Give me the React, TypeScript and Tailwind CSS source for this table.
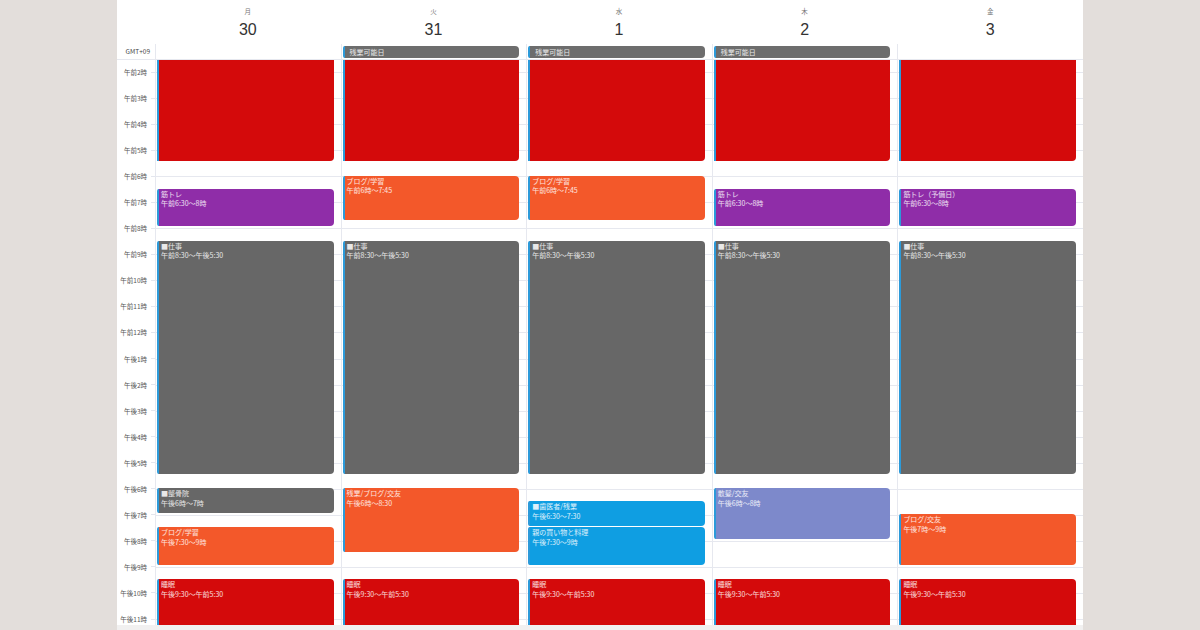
import React from "react";

const HOUR = 26.05;

type Ev = { s: number; e: number; title: string; time: string; bg: string; cont?: boolean };

const C = {
  red: "bg-[#d40a0b]",
  orange: "bg-[#f3582a]",
  purple: "bg-[#8f2da8]",
  gray: "bg-[#676767]",
  blue: "bg-[#0f9ee2]",
  lav: "bg-[#7d89cb]",
};

const SLEEP_PREV: Ev = { s: 0, e: 5.5, title: "睡眠", time: "午後9:30〜午前5:30", bg: C.red, cont: true };
const SLEEP: Ev = { s: 21.5, e: 24, title: "睡眠", time: "午後9:30〜午前5:30", bg: C.red };
const WORK: Ev = { s: 8.5, e: 17.5, title: "■仕事", time: "午前8:30〜午後5:30", bg: C.gray };

const days: { name: string; date: string; allDay: boolean; events: Ev[] }[] = [
  {
    name: "月",
    date: "30",
    allDay: false,
    events: [
      SLEEP_PREV,
      { s: 6.5, e: 8, title: "筋トレ", time: "午前6:30〜8時", bg: C.purple },
      WORK,
      { s: 18, e: 19, title: "■整骨院", time: "午後6時〜7時", bg: C.gray },
      { s: 19.5, e: 21, title: "ブログ/学習", time: "午後7:30〜9時", bg: C.orange },
      SLEEP,
    ],
  },
  {
    name: "火",
    date: "31",
    allDay: true,
    events: [
      SLEEP_PREV,
      { s: 6, e: 7.75, title: "ブログ/学習", time: "午前6時〜7:45", bg: C.orange },
      WORK,
      { s: 18, e: 20.5, title: "残業/ブログ/交友", time: "午後6時〜8:30", bg: C.orange },
      SLEEP,
    ],
  },
  {
    name: "水",
    date: "1",
    allDay: true,
    events: [
      SLEEP_PREV,
      { s: 6, e: 7.75, title: "ブログ/学習", time: "午前6時〜7:45", bg: C.orange },
      WORK,
      { s: 18.5, e: 19.5, title: "■歯医者/残業", time: "午後6:30〜7:30", bg: C.blue },
      { s: 19.5, e: 21, title: "親の買い物と料理", time: "午後7:30〜9時", bg: C.blue },
      SLEEP,
    ],
  },
  {
    name: "木",
    date: "2",
    allDay: true,
    events: [
      SLEEP_PREV,
      { s: 6.5, e: 8, title: "筋トレ", time: "午前6:30〜8時", bg: C.purple },
      WORK,
      { s: 18, e: 20, title: "散髪/交友", time: "午後6時〜8時", bg: C.lav },
      SLEEP,
    ],
  },
  {
    name: "金",
    date: "3",
    allDay: false,
    events: [
      SLEEP_PREV,
      { s: 6.5, e: 8, title: "筋トレ（予備日）", time: "午前6:30〜8時", bg: C.purple },
      WORK,
      { s: 19, e: 21, title: "ブログ/交友", time: "午後7時〜9時", bg: C.orange },
      SLEEP,
    ],
  },
];

function hourLabel(h: number) {
  if (h < 12) return `午前${h}時`;
  if (h === 12) return "午前12時";
  return `午後${h - 12}時`;
}

// y (relative to body top) of hour h
const yOf = (h: number) => 12 + (h - 2) * HOUR;
const labelHours = Array.from({ length: 22 }, (_, i) => i + 2);
const lineHours = Array.from({ length: 23 }, (_, i) => i + 2);
const FONT = { fontFamily: '"Noto Sans CJK JP", "Noto Sans", sans-serif' };

export default function App() {
  return (
    <div className="w-[1200px] h-[630px] overflow-hidden bg-[#e3dedb]" style={FONT}>
      <div className="mx-auto w-[966px] h-[630px] bg-white flex flex-col">
        {/* header */}
        <div className="flex h-[44px] shrink-0">
          <div className="w-[38px] shrink-0" />
          {days.map((d) => (
            <div key={d.date} className="flex-1 flex flex-col items-center">
              <div className="mt-[7px] h-[8px] text-[6.5px] leading-[8px] text-[#777]">{d.name}</div>
              <div
                className="mt-[5px] text-[16px] leading-[20px] text-[#333]"
                style={{ fontFamily: '"Liberation Sans", Arial, sans-serif' }}
              >
                {d.date}
              </div>
            </div>
          ))}
        </div>
        {/* all-day row */}
        <div className="flex h-[16px] shrink-0 border-b border-[#e6e8ef]">
          <div className="w-[38px] shrink-0 flex items-center justify-end pr-[5px] text-[6.5px] text-[#444]">
            GMT+09
          </div>
          {days.map((d) => (
            <div key={d.date} className="flex-1 border-l border-[#e6e8ef] pt-[2px] pl-px pr-[7px]">
              {d.allDay && (
                <div className="h-[12px] rounded-[4px] rounded-l-[2px] border-l-2 border-[#2c9ad9] bg-[#6d6d6d] pl-[5px] text-[7px] leading-[12px] text-white/85">
                  残業可能日
                </div>
              )}
            </div>
          ))}
        </div>
        {/* body */}
        <div className="flex h-[565px] shrink-0 overflow-hidden">
          <div className="w-[38px] shrink-0">
            <div className="-mt-[1px]">
              {labelHours.map((h) => (
                <div key={h} className="h-[26.05px] flex items-center justify-end gap-[4px]">
                  <span className="text-[6.5px] leading-[10px] text-[#555]">{hourLabel(h)}</span>
                  <span className="w-[4px] h-px bg-[#e3e6ee]" />
                </div>
              ))}
            </div>
          </div>
          {days.map((d) => (
            <div key={d.date} className="flex-1 border-l border-[#e6e8ef] relative">
              <div className="relative">
                <div className="h-[12px]" />
                {lineHours.map((h) => (
                  <div key={h} className="h-[26.05px] border-t border-[#e6e8ef]" />
                ))}
                {d.events.map((ev, i) => {
                  const top = ev.cont ? 0 : yOf(ev.s) - 0.5;
                  const bottom = ev.e >= 24 ? 580 : yOf(ev.e) - 2;
                  return (
                    <div
                      key={i}
                      className={`absolute left-px right-[7px] ${ev.cont ? "rounded-br-[4px]" : "rounded-[4px] rounded-l-[2px]"} border-l-2 border-[#2c9ad9] ${ev.bg} pl-[2px] pt-[1px] overflow-hidden`}
                      style={{ top, height: bottom - top }}
                    >
                      {!ev.cont && (
                        <>
                          <div className="text-[7px] leading-[9.5px] text-white/85 whitespace-nowrap">{ev.title}</div>
                          <div className="text-[7px] leading-[9.5px] text-white/85 whitespace-nowrap">{ev.time}</div>
                        </>
                      )}
                    </div>
                  );
                })}
              </div>
            </div>
          ))}
        </div>
        <div className="flex-1 bg-[#f1f0f0]" />
      </div>
    </div>
  );
}
